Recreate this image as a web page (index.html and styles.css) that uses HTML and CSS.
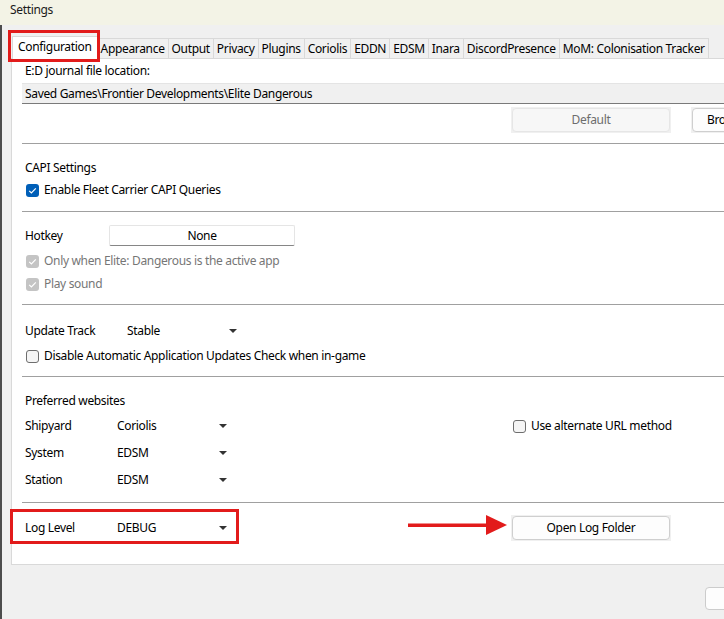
FILE: index.html
```html
<!DOCTYPE html>
<html>
<head>
<meta charset="utf-8">
<title>Settings</title>
<link rel="stylesheet" href="styles.css">
</head>
<body>
<div class="window">
  <div class="titlebar">Settings</div>
  <div class="main">
    <div class="tabs">
      <div class="tab active">Configuration</div>
      <div class="tab">Appearance</div>
      <div class="tab">Output</div>
      <div class="tab">Privacy</div>
      <div class="tab">Plugins</div>
      <div class="tab">Coriolis</div>
      <div class="tab">EDDN</div>
      <div class="tab">EDSM</div>
      <div class="tab">Inara</div>
      <div class="tab">DiscordPresence</div>
      <div class="tab">MoM: Colonisation Tracker</div>
    </div>
    <div class="panel">
      <div class="row journal-label"><span class="text">E:D journal file location:</span></div>
      <div class="pathfield">Saved Games\Frontier Developments\Elite Dangerous</div>
      <div class="row btn-row">
        <div class="lead"></div>
        <div class="bframe"><button class="btn disabled">Default</button></div>
        <div class="bframe browse"><button class="btn">Browse...</button></div>
      </div>
      <div class="sep sep-a"></div>

      <div class="row capi-title"><span class="text">CAPI Settings</span></div>
      <div class="row capi-check">
        <label class="check"><span class="box checked"><svg viewBox="0 0 13 13" width="13" height="13"><path d="M3.2 6.8 L5.4 9 L9.8 4.4" fill="none" stroke="#fff" stroke-width="1.2"/></svg></span>Enable Fleet Carrier CAPI Queries</label>
      </div>
      <div class="sep sep-b"></div>

      <div class="row hotkey-row">
        <span class="lbl lbl-hotkey">Hotkey</span>
        <div class="hotkey-btn">None</div>
      </div>
      <div class="row only-row">
        <label class="check disabled-text"><span class="box dis"><svg viewBox="0 0 13 13" width="13" height="13"><path d="M3.2 6.8 L5.4 9 L9.8 4.4" fill="none" stroke="#fff" stroke-width="1.2"/></svg></span>Only when Elite: Dangerous is the active app</label>
      </div>
      <div class="row play-row">
        <label class="check disabled-text"><span class="box dis"><svg viewBox="0 0 13 13" width="13" height="13"><path d="M3.2 6.8 L5.4 9 L9.8 4.4" fill="none" stroke="#fff" stroke-width="1.2"/></svg></span>Play sound</label>
      </div>
      <div class="sep sep-c"></div>

      <div class="row update-row">
        <span class="lbl lbl-update">Update Track</span>
        <div class="select"><span>Stable</span><span class="caret"></span></div>
      </div>
      <div class="row disable-row">
        <label class="check"><span class="box empty"></span>Disable Automatic Application Updates Check when in-game</label>
      </div>
      <div class="sep sep-d"></div>

      <div class="row web-title"><span class="text">Preferred websites</span></div>
      <div class="row ship-row">
        <div class="lead">
          <span class="lbl">Shipyard</span>
          <div class="select"><span>Coriolis</span><span class="caret"></span></div>
        </div>
        <label class="check alt"><span class="box empty"></span>Use alternate URL method</label>
      </div>
      <div class="row sys-row">
        <span class="lbl">System</span>
        <div class="select"><span>EDSM</span><span class="caret"></span></div>
      </div>
      <div class="row station-row">
        <span class="lbl">Station</span>
        <div class="select"><span>EDSM</span><span class="caret"></span></div>
      </div>
      <div class="sep sep-e"></div>

      <div class="row log-row">
        <div class="lead">
          <span class="lbl">Log Level</span>
          <div class="select"><span>DEBUG</span><span class="caret"></span></div>
        </div>
        <div class="bframe"><button class="btn">Open Log Folder</button></div>
      </div>
    </div>
    <div class="footer"><button class="btn foot-btn">OK</button></div>
  </div>

  <div class="annot box1"></div>
  <div class="annot box2"></div>
  <svg class="annot-arrow" width="100" height="22" viewBox="0 0 100 22">
    <rect x="0" y="9.5" width="80" height="3.5" fill="#e21b1b"/>
    <polygon points="78,1 99,11 78,21" fill="#e21b1b"/>
  </svg>
</div>
</body>
</html>
```

FILE: styles.css
```css
* { box-sizing: border-box; }

html, body {
  margin: 0;
  padding: 0;
}

body {
  width: 724px;
  height: 619px;
  overflow: hidden;
  background: #f0f0f0;
  font-family: "Noto Sans", "DejaVu Sans", sans-serif;
  font-size: 12px;
  letter-spacing: -0.33px;
  color: #000;
}

.window {
  position: relative;
  width: 724px;
  height: 619px;
  overflow: hidden;
}

.titlebar {
  height: 25px;
  background: #f3f3e6;
  padding-left: 10px;
  line-height: 20px;
  color: #1a1a1a;
}

.main {
  border-left: 2px solid #4d4d4d;
  padding: 11px 0 0 9px;
  height: 594px;
}

/* tabs */
.tabs {
  display: flex;
  align-items: flex-end;
  height: 22px;
  padding-left: 1px;
  position: relative;
  z-index: 1;
  white-space: nowrap;
}

.tab {
  height: 20px;
  padding: 0 3px;
  border: 1px solid #d9d9d9;
  border-bottom: none;
  margin-left: -1px;
  line-height: 19px;
  background: #f0f0f0;
  flex: none;
}

.tab:first-child { margin-left: 0; }

.tab.active {
  height: 23px;
  margin-bottom: -1px;
  padding: 0 5px;
  line-height: 20px;
  background: #fff;
  border-color: #d9d9d9;
  position: relative;
  z-index: 2;
}

/* panel */
.panel {
  width: 800px;
  background: #fff;
  border: 1px solid #d9d9d9;
  padding: 0 0 23px 10px;
  display: flex;
  flex-direction: column;
}

.row {
  display: flex;
  align-items: center;
  height: 16px;
  line-height: 16px;
  white-space: nowrap;
}

.text { padding-left: 3px; }

.journal-label { margin-top: 3px; height: 17px; line-height: 17px; }

.pathfield {
  margin-top: 4px;
  height: 21px;
  background: #f0f0f0;
  border-top: 1px solid #e4e4e4;
  border-bottom: 1px solid #7a7a7a;
  padding-left: 3px;
  line-height: 19px;
  white-space: nowrap;
}

.btn-row { margin-top: 3px; height: 26px; }

.lead {
  width: 489px;
  display: flex;
  align-items: center;
  flex: none;
}

.bframe {
  width: 160px;
  height: 26px;
  padding: 1px;
  background: #f0f0f0;
  flex: none;
}

.bframe.browse { margin-left: 20px; width: 80px; }

.btn {
  width: 100%;
  height: 100%;
  margin: 0;
  border: 1px solid #cfcfcf;
  border-radius: 4px;
  background: #fdfdfd;
  font-family: inherit;
  font-size: 12px;
  letter-spacing: -0.33px;
  color: #000;
  padding: 0;
  line-height: 20px;
}

.btn.disabled {
  background: #f7f7f7;
  border-color: #e6e6e6;
  color: #6d6d6d;
}

.sep {
  height: 1px;
  background: #a0a0a0;
  flex: none;
}

.sep-a { margin-top: 10px; }
.capi-title { margin-top: 16px; }
.capi-check { margin-top: 6px; }
.sep-b { margin-top: 13px; }
.hotkey-row { margin-top: 13px; height: 21px; }
.only-row { margin-top: 7px; }
.play-row { margin-top: 7px; }
.sep-c { margin-top: 12px; }
.update-row { margin-top: 18px; }
.disable-row { margin-top: 9px; }
.sep-d { margin-top: 12px; }
.web-title { margin-top: 16px; }
.ship-row { margin-top: 9px; }
.sys-row { margin-top: 11px; }
.station-row { margin-top: 11px; }
.sep-e { margin-top: 14px; }
.log-row { margin-top: 12px; height: 26px; }

/* labels & inputs */
.lbl {
  width: 95px;
  padding-left: 3px;
  flex: none;
}

.lbl-hotkey { width: 87px; }
.lbl-update { width: 105px; }

.hotkey-btn {
  width: 186px;
  height: 21px;
  background: #fff;
  border: 1px solid #e5e5e5;
  border-bottom-color: #868686;
  border-radius: 2px;
  text-align: center;
  line-height: 19px;
}

.select {
  width: 110px;
  display: flex;
  align-items: center;
  justify-content: space-between;
  flex: none;
}

.caret {
  width: 0;
  height: 0;
  border-left: 4px solid transparent;
  border-right: 4px solid transparent;
  border-top: 4px solid #333;
}

.check {
  display: flex;
  align-items: center;
  padding-left: 4px;
}

.check.alt { padding-left: 2px; }

.box {
  width: 13px;
  height: 13px;
  border-radius: 3px;
  margin-right: 5px;
  flex: none;
  display: block;
}

.box svg { display: block; }

.box.checked { background: #005fb8; }
.box.dis { background: #c4c4c4; }
.box.empty {
  border: 1px solid #6e6e6e;
  background: #f5f5f5;
}

.disabled-text { color: #767676; }

/* footer */
.footer {
  display: flex;
  justify-content: flex-end;
  margin-top: 22px;
}

.foot-btn {
  width: 72px;
  height: 23px;
  margin-right: -53px;
  border-color: #cccccc;
}

/* annotations (overlays) */
.annot {
  position: absolute;
  border: 3px solid #e21b1b;
  pointer-events: none;
}

.box1 { left: 8px; top: 30px; width: 92px; height: 32px; z-index: 5; }
.box2 { left: 10px; top: 509px; width: 229px; height: 35px; }

.annot-arrow {
  position: absolute;
  left: 408px;
  top: 514px;
}
```
